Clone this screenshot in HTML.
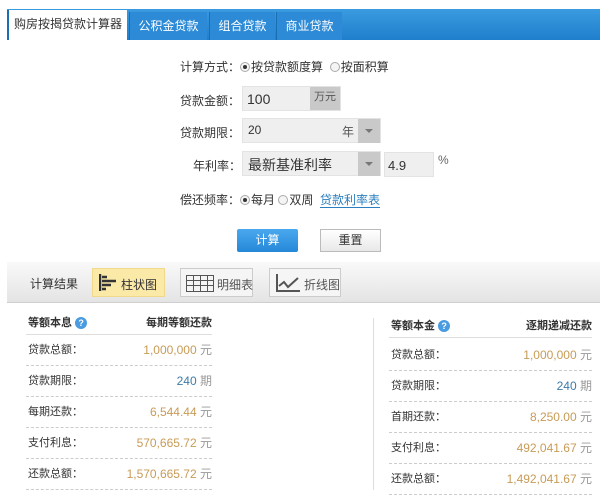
<!DOCTYPE html>
<html><head><meta charset="utf-8"><style>
*{margin:0;padding:0;box-sizing:border-box}
body{width:600px;height:493px;background:#fff;position:relative;overflow:hidden;font-family:"Liberation Sans","Noto Sans CJK SC",sans-serif;font-size:11px;color:#333;white-space:nowrap}
.a{position:absolute}
.tabbar{left:7px;top:9px;width:593px;height:31px;background:linear-gradient(#3a9be0,#1f7fcc)}
.tab{position:absolute;top:3px;height:28px;line-height:28px;color:#fff;text-align:center;background:#2c8ad6;border-left:1px solid #1a6fb3;font-size:12px}
.lbl{font-size:12px;color:#333}
.box{background:#efefef;border:1px solid #e3e3e3}
.radio{display:inline-block;width:10px;height:10px;border-radius:50%;border:1px solid #aaa;background:#f4f4f4;vertical-align:-1px;margin-right:1px;position:relative}
.radio.on:after{content:"";position:absolute;left:2px;top:2px;width:4px;height:4px;border-radius:50%;background:#333}
.dd{background:#c9c9c9;width:22px;height:24px;position:absolute;top:0;right:0}
.dd:after{content:"";position:absolute;left:7px;top:10px;border:4px solid transparent;border-top:4px solid #777}
.row{position:absolute;width:100%;height:31px;border-bottom:1px dashed #ccc;line-height:30px;font-size:12px}
.row .k{position:absolute;left:2px;font-size:11px}
.row .v{position:absolute;right:0}
.o{color:#c89b56}.b{color:#3c7ba8}.u{color:#999}
.hd{position:absolute;top:0;width:100%;height:21px;border-bottom:1px solid #ddd;font-weight:bold;font-size:11px;line-height:18px}
.q{display:inline-block;width:12px;height:12px;border-radius:50%;background:#4a9be0;color:#fff;font-size:9px;line-height:12px;text-align:center;vertical-align:0}
</style></head><body>
<div class="a tabbar">
 <div class="tab" style="left:0;width:120px;background:#fff;color:#333;border-left:2px solid #1a6fb3;top:1px;height:30px;line-height:28px">购房按揭贷款计算器</div>
 <div class="tab" style="left:122px;width:78px">公积金贷款</div>
 <div class="tab" style="left:202px;width:66px">组合贷款</div>
 <div class="tab" style="left:269px;width:66px">商业贷款</div>
</div>

<div class="a lbl" style="left:180px;top:58px">计算方式：<span class="radio on"></span>按贷款额度算 &nbsp;<span class="radio"></span>按面积算</div>
<div class="a lbl" style="left:180px;top:92px">贷款金额：</div>
<div class="a box" style="left:242px;top:86px;width:99px;height:25px"><span class="a" style="left:4px;top:4px;font-size:14px">100</span><span class="a" style="right:0;top:0;width:30px;height:23px;background:#c9c9c9;color:#555;line-height:20px;text-align:center">万元</span></div>
<div class="a lbl" style="left:180px;top:124px">贷款期限：</div>
<div class="a box" style="left:242px;top:118px;width:139px;height:25px"><span class="a" style="left:5px;top:4px;font-size:12px">20</span><span class="a" style="left:99px;top:4px;color:#555;font-size:12px">年</span><div class="dd"></div></div>
<div class="a lbl" style="left:193px;top:157px">年利率：</div>
<div class="a box" style="left:242px;top:151px;width:139px;height:25px"><span class="a" style="left:5px;top:3px;font-size:14px">最新基准利率</span><div class="dd"></div></div>
<div class="a box" style="left:384px;top:152px;width:50px;height:25px"><span class="a" style="left:3px;top:5px;font-size:13px">4.9</span></div>
<div class="a lbl" style="left:438px;top:153px;color:#666">%</div>
<div class="a lbl" style="left:180px;top:191px">偿还频率：<span class="radio on"></span>每月 <span class="radio"></span>双周 &nbsp;<span style="color:#2b7fc0;border-bottom:1px solid #2b7fc0">贷款利率表</span></div>
<div class="a" style="left:237px;top:229px;width:61px;height:23px;background:linear-gradient(#4aa8ee,#2588d8);border-radius:2px;color:#fff;text-align:center;line-height:23px;font-size:12px">计算</div>
<div class="a" style="left:320px;top:229px;width:61px;height:23px;background:linear-gradient(#fff,#e8e8e8);border:1px solid #bbb;text-align:center;line-height:21px;font-size:12px">重置</div>

<div class="a" style="left:7px;top:262px;width:593px;height:41px;background:linear-gradient(#f9f9f9,#e4e4e4);border-bottom:1px solid #cfcfcf"></div>
<div class="a lbl" style="left:30px;top:275px;font-size:12px">计算结果</div>
<div class="a" style="left:92px;top:268px;width:73px;height:29px;background:#fbe9a8;border:1px solid #f0d98a"><svg class="a" style="left:6px;top:5px" width="20" height="18"><path d="M1 0V17M3 3h5M3 7h14M3 11h9M3 15h4" stroke="#333" stroke-width="2.5"/></svg><span class="a" style="left:28px;top:7px;font-size:12px">柱状图</span></div>
<div class="a" style="left:180px;top:268px;width:73px;height:29px;background:#f5f5f5;border:1px solid #ccc"><svg class="a" style="left:5px;top:6px" width="28" height="17"><rect x=".5" y=".5" width="27" height="16" fill="none" stroke="#555"/><path d="M0 5.5h28M0 10.5h28M7.5 0v17M14.5 0v17M21.5 0v17" stroke="#555"/></svg><span class="a" style="left:36px;top:7px;color:#555;font-size:12px">明细表</span></div>
<div class="a" style="left:269px;top:268px;width:72px;height:29px;background:#f5f5f5;border:1px solid #ccc"><svg class="a" style="left:6px;top:5px" width="24" height="18"><path d="M1 0V17H24M3 12L8 8L12 13L22 4" stroke="#555" stroke-width="2" fill="none"/></svg><span class="a" style="left:34px;top:7px;color:#555;font-size:12px">折线图</span></div>

<div class="a" style="left:26px;top:314px;width:186px;height:179px">
 <div class="hd"><span class="a" style="left:2px">等额本息 <span class="q">?</span></span><span class="a" style="right:0">每期等额还款</span></div>
 <div class="row" style="top:21px"><span class="k">贷款总额：</span><span class="v o">1,000,000 <span class="u">元</span></span></div>
 <div class="row" style="top:52px"><span class="k">贷款期限：</span><span class="v b">240 <span class="u">期</span></span></div>
 <div class="row" style="top:83px"><span class="k">每期还款：</span><span class="v o">6,544.44 <span class="u">元</span></span></div>
 <div class="row" style="top:114px"><span class="k">支付利息：</span><span class="v o">570,665.72 <span class="u">元</span></span></div>
 <div class="row" style="top:145px"><span class="k">还款总额：</span><span class="v o">1,570,665.72 <span class="u">元</span></span></div>
</div>
<div class="a" style="left:373px;top:318px;width:1px;height:172px;background:#ddd"></div>
<div class="a" style="left:389px;top:317px;width:203px;height:176px">
 <div class="hd"><span class="a" style="left:2px">等额本金 <span class="q">?</span></span><span class="a" style="right:0">逐期递减还款</span></div>
 <div class="row" style="top:23px"><span class="k">贷款总额：</span><span class="v o">1,000,000 <span class="u">元</span></span></div>
 <div class="row" style="top:54px"><span class="k">贷款期限：</span><span class="v b">240 <span class="u">期</span></span></div>
 <div class="row" style="top:85px"><span class="k">首期还款：</span><span class="v o">8,250.00 <span class="u">元</span></span></div>
 <div class="row" style="top:116px"><span class="k">支付利息：</span><span class="v o">492,041.67 <span class="u">元</span></span></div>
 <div class="row" style="top:147px"><span class="k">还款总额：</span><span class="v o">1,492,041.67 <span class="u">元</span></span></div>
</div>
</body></html>
